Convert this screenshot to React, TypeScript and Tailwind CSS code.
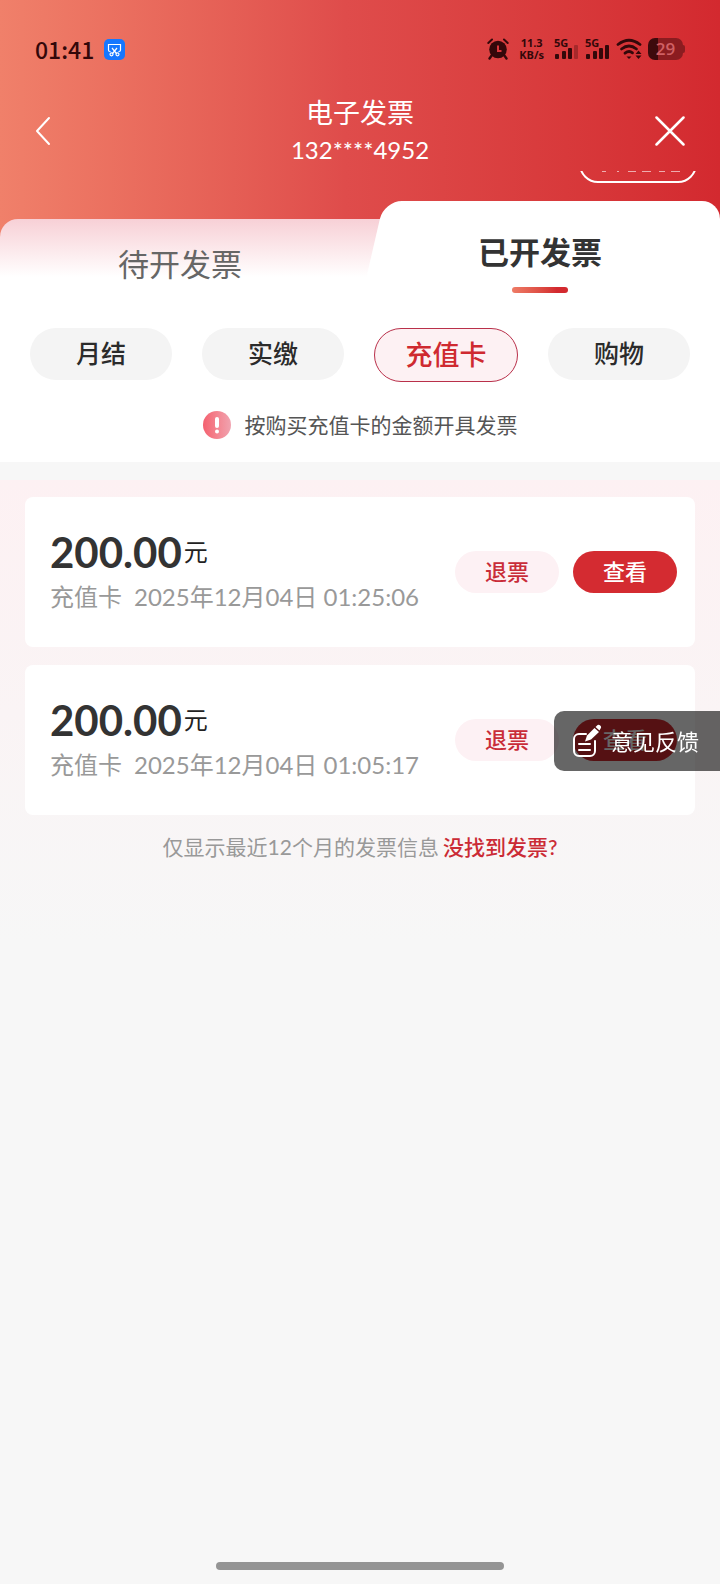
import React, { useState } from "react";

const TABS = ["待开发票", "已开发票"];
const CATEGORIES = ["月结", "实缴", "充值卡", "购物"];

const INVOICES = [
  { id: 1, amount: "200.00", type: "充值卡", time: "2025年12月04日 01:25:06" },
  { id: 2, amount: "200.00", type: "充值卡", time: "2025年12月04日 01:05:17" },
];

function AlarmIcon() {
  return (
    <svg width="22" height="22" viewBox="0 0 22 22" fill="none" stroke="currentColor" strokeLinecap="round">
      <circle cx="11" cy="11.500" r="8.800" fill="currentColor" stroke="none" />
      <path d="M1.300 5 5 1.500M20.700 5 17 1.500" strokeWidth="2" />
      <path d="m5 17-2.500 3.500M17 17l2.500 3.500" strokeWidth="2.400" />
      <path d="M11 7.500v5.500h3.500" stroke="#d8363b" strokeWidth="2" strokeLinecap="butt" />
    </svg>
  );
}

function SignalIcon({ level }: { level: number }) {
  return (
    <div className="relative h-[22px] w-[25px]">
      <span className="absolute -top-px left-0 text-[11px] leading-[11px] font-bold">5G</span>
      <svg width="25" height="22" viewBox="0 0 25 22" fill="currentColor">
        <rect x="1" y="16" width="4" height="5" rx="1" />
        <rect x="8" y="13" width="4" height="8" rx="1" />
        <rect x="14" y="10" width="4" height="11" rx="1" />
        <rect x="20" y="7" width="4" height="14" rx="1" opacity={level > 3 ? 1 : 0.3} />
      </svg>
    </div>
  );
}

function WifiIcon() {
  return (
    <svg width="26" height="22" viewBox="0 0 26 22" fill="none" stroke="currentColor" strokeLinecap="round" strokeWidth="2.8">
      <path d="M2 6.5Q13-2 24 6.5" />
      <path d="M5.5 11Q13 5 20.5 11" />
      <path d="M9 15.2Q13 12 16.5 14.8" />
      <path d="M10.5 18.5h5L13 21Z" fill="currentColor" stroke="none" />
      <path d="m19.5 16 3-3.500 3 3.500ZM19.500 17.500l3 3.500 3-3.500Z" fill="currentColor" stroke="none" />
    </svg>
  );
}

function StatusBar() {
  return (
    <div className="flex h-[26px] items-center justify-between px-[35px] text-[#33080a]">
      <div className="flex items-center gap-[10px]">
        <span className="text-[23px] leading-[24px] font-medium font-['Noto_Sans_CJK_SC',sans-serif]">01:41</span>
        <span className="flex h-[21px] w-[21px] items-center justify-center rounded-[5px] bg-[#1677ff] text-white">
          <svg width="15" height="15" viewBox="0 0 15 15" fill="none" stroke="currentColor" strokeWidth="1.2">
            <path d="M3.500 9.500H3A1.500 1.500 0 0 1 1.500 8V2.500h12V8A1.500 1.500 0 0 1 12 9.500h-.5" />
            <path d="m5 6 4.500 5.500M10 6l-4.500 5.500" />
            <circle cx="4.500" cy="12.300" r="1.500" />
            <circle cx="10.500" cy="12.300" r="1.500" />
          </svg>
        </span>
      </div>
      <div className="flex items-center gap-[6px] font-['Open_Sans',sans-serif]">
        <AlarmIcon />
        <div className="mx-1 text-center text-[11px] leading-[12px] font-bold">
          <p>11.3</p>
          <p>KB/s</p>
        </div>
        <SignalIcon level={3} />
        <SignalIcon level={4} />
        <WifiIcon />
        <div className="flex items-center">
          <span className="flex h-[22px] w-[35px] items-center justify-center rounded-[7px] bg-linear-to-r from-[#3d0a0c] from-28% to-[#8b1c20] to-28% text-[17px] leading-[22px] font-semibold text-[#d06064]">
            29
          </span>
          <span className="h-2 w-[2px] rounded-r-full bg-[#8b1c20]" />
        </div>
      </div>
    </div>
  );
}

function NavBar() {
  return (
    <div className="mt-[32px] mb-[3px] flex items-center justify-between px-[35px] text-white">
      <button aria-label="返回" className="flex w-[30px]">
        <svg width="16" height="30" viewBox="0 0 16 30" fill="none" stroke="currentColor" strokeWidth="2" strokeLinecap="round" strokeLinejoin="round">
          <path d="M14 2 2 15l12 13" />
        </svg>
      </button>
      <div className="text-center">
        <h1 className="text-[27px] leading-[37px]">电子发票</h1>
        <p className="text-[24px] leading-[37px]">132****4952</p>
      </div>
      <button aria-label="关闭">
        <svg width="30" height="30" viewBox="0 0 30 30" fill="none" stroke="currentColor" strokeWidth="2.500" strokeLinecap="round">
          <path d="m1.500 1.500 27 27M28.500 1.500l-27 27" />
        </svg>
      </button>
    </div>
  );
}

function FeedbackIcon() {
  return (
    <svg width="30" height="34" viewBox="0 0 30 34" fill="none" stroke="currentColor" strokeWidth="2" strokeLinecap="round">
      <path d="M14 10H7a5 5 0 0 0-5 5v12a5 5 0 0 0 5 5h11a5 5 0 0 0 5-5V17" />
      <path d="M7 20h11M7 26h11" />
      <path d="m13 17.500 2-6L22.500 4 27 8l-8 7.500Z" fill="currentColor" stroke="none" />
      <path d="m23.500 3 1.300-1.300a2.200 2.200 0 0 1 3.500 3.300L27.500 6.500Z" fill="currentColor" stroke="none" />
    </svg>
  );
}

export default function App() {
  const [tab, setTab] = useState("已开发票");
  const [category, setCategory] = useState("充值卡");

  return (
    <div className="flex min-h-screen flex-col bg-[#f7f7f7] font-['Lato','Noto_Sans_CJK_SC',sans-serif] text-[#333]">
      <header className="bg-linear-to-r from-[#f0806a] via-[#df4c4b] via-48% to-[#d3292f] pt-[36px]">
        <StatusBar />
        <NavBar />

        {/* Page content scrolled under the nav bar, only the bottom of the pill shows */}
        <div className="flex h-[30px] justify-end overflow-hidden pr-[23px]">
          <div className="relative -mt-[26px] h-[38px] w-[118px] rounded-[22px] border-2 border-white">
            <svg className="absolute top-[24px] left-[20px]" width="82" height="2" fill="#fff" opacity="0.6">
              <rect x="1" width="4" height="1" />
              <rect x="16" width="2" height="1" />
              <rect x="27" width="8" height="1" />
              <rect x="41" width="9" height="1" />
              <rect x="58" width="6" height="1" />
              <rect x="70" width="9" height="1" />
            </svg>
          </div>
        </div>

        {/* Tabs */}
        <div className="relative isolate grid grid-cols-2 items-start text-[31px] leading-[46px]">
          <div className="absolute inset-x-0 top-[18px] bottom-0 -z-20 rounded-t-[18px] bg-linear-to-b from-[#f7d0d6] to-white to-[58px]" />
          <button onClick={() => setTab(TABS[0])} aria-pressed={tab === TABS[0]} className="mt-[18px] pt-[22px] text-[#666]">
            {TABS[0]}
          </button>
          <button
            onClick={() => setTab(TABS[1])}
            aria-pressed={tab === TABS[1]}
            className="relative flex h-[104px] flex-col items-center pt-[28px] font-bold before:absolute before:inset-y-0 before:left-[12px] before:-z-10 before:w-[100px] before:-skew-x-[13deg] before:rounded-tl-[18px] before:bg-white after:absolute after:inset-y-0 after:right-0 after:left-[60px] after:-z-10 after:rounded-tr-[18px] after:bg-white"
          >
            {TABS[1]}
            <span className="mt-[12px] h-[6px] w-[56px] rounded-full bg-linear-to-r from-[#ee7b66] to-[#d3292f] to-80%" />
          </button>
        </div>
      </header>

      <section className="bg-white px-[30px] pt-[23px] pb-[22px]">
        <div className="flex items-start gap-[30px]">
          {CATEGORIES.map((name) => (
            <button
              key={name}
              onClick={() => setCategory(name)}
              className={
                name === category
                  ? "h-[54px] flex-1 rounded-full border border-[#b9304a] bg-[#fdf1f3] text-[27px] font-medium text-[#cf2a30]"
                  : "h-[52px] flex-1 rounded-full bg-[#f4f4f4] text-[25px] font-medium text-[#2b2b2b]"
              }
            >
              {name}
            </button>
          ))}
        </div>

        <p className="mt-[28px] flex items-center justify-center gap-[14px] text-[21px] leading-[30px] text-[#555]">
          <span className="flex h-[28px] w-[28px] items-center justify-center rounded-full bg-linear-to-r from-[#f4606f] to-[#f0a3b0]">
            <svg width="6" height="18" viewBox="0 0 6 18" fill="#fff">
              <rect x="1" y="1" width="4" height="11" rx="2" />
              <circle cx="3" cy="15.500" r="2" />
            </svg>
          </span>
          按购买充值卡的金额开具发票
        </p>
      </section>

      <main className="mt-[18px] bg-linear-to-b from-[#fdf1f3] to-[#f7f7f7] px-[25px] pt-[17px] pb-[80px]">
        <ul className="flex flex-col gap-[18px]">
          {INVOICES.map((item) => (
            <li key={item.id} className="flex h-[150px] items-center justify-between rounded-lg bg-white pr-[18px] pl-[25px]">
              <div className="pt-[6px]">
                <p className="flex items-start gap-[2px]">
                  <span className="text-[42px] leading-[44px] font-bold">{item.amount}</span>
                  <span className="text-[24px] leading-[44px] text-[#222]">元</span>
                </p>
                <p className="flex gap-[12px] text-[24px] leading-[46px] text-[#999]">
                  <span>{item.type}</span>
                  <span>{item.time}</span>
                </p>
              </div>
              <div className="flex gap-[14px] text-[22px] leading-[42px] font-medium">
                <button className="h-[42px] w-[104px] rounded-full bg-[#fdf1f4] text-[#c92d39]">退票</button>
                <button className="h-[42px] w-[104px] rounded-full bg-[#d42b31] text-white">查看</button>
              </div>
            </li>
          ))}
        </ul>
        <p className="mt-[17px] flex justify-center gap-[4px] text-[21px] leading-[30px] text-[#999]">
          <span>仅显示最近12个月的发票信息</span>
          <a href="#help" className="font-medium text-[#cb2b35]">没找到发票?</a>
        </p>
      </main>

      {/* Floating feedback entry */}
      <button className="fixed top-[711px] right-0 flex h-[60px] items-center gap-[9px] rounded-l-[10px] bg-black/60 pr-[21px] pl-[18px] text-[22px] text-white">
        <FeedbackIcon />
        意见反馈
      </button>

      {/* Home indicator */}
      <div className="mx-auto mt-auto mb-[14px] h-[8px] w-2/5 rounded-full bg-[#949494]" />
    </div>
  );
}
